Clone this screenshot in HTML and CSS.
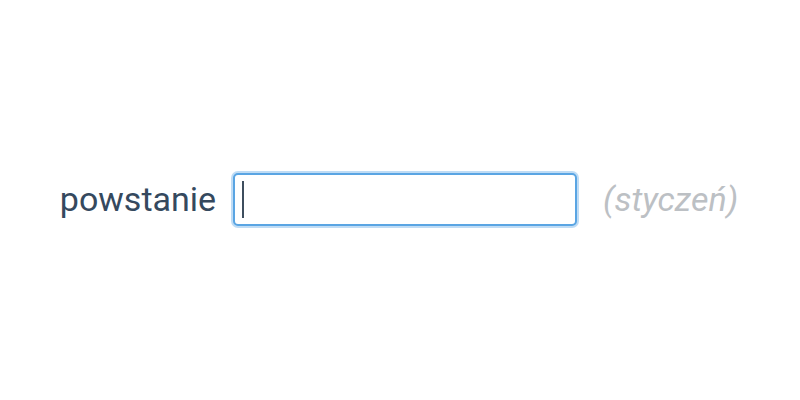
FILE: index.html
```html
<!DOCTYPE html>
<html lang="pl">
<head>
<meta charset="utf-8">
<link rel="stylesheet" href="styles.css">
</head>
<body>
<div class="row">
  <label class="label">powstanie</label>
  <div class="field"><span class="caret"></span></div>
  <span class="hint">(styczeń)</span>
</div>
</body>
</html>
```
FILE: styles.css
```css
html, body {
  margin: 0;
  padding: 0;
  background: #fff;
}
body {
  width: 800px;
  height: 400px;
  display: flex;
  align-items: center;
  justify-content: center;
  font-family: Roboto, "Noto Sans", sans-serif;
}
.row {
  display: flex;
  align-items: center;
  margin-top: -2px;
  margin-left: -2px;
}
.label {
  font-size: 34px;
  color: #35495e;
  margin-right: 17px;
}
.field {
  box-sizing: border-box;
  width: 344px;
  height: 53px;
  border: 2px solid #5aa5e3;
  border-radius: 5px;
  box-shadow: 0 0 0 2px #bfdcf5;
  display: flex;
  align-items: center;
  padding-left: 7px;
  background: #fff;
}
.caret {
  width: 2px;
  height: 37px;
  background: #3e4e5e;
}
.hint {
  font-size: 34px;
  font-style: italic;
  color: #bcc0c4;
  margin-left: 26px;
}
```
